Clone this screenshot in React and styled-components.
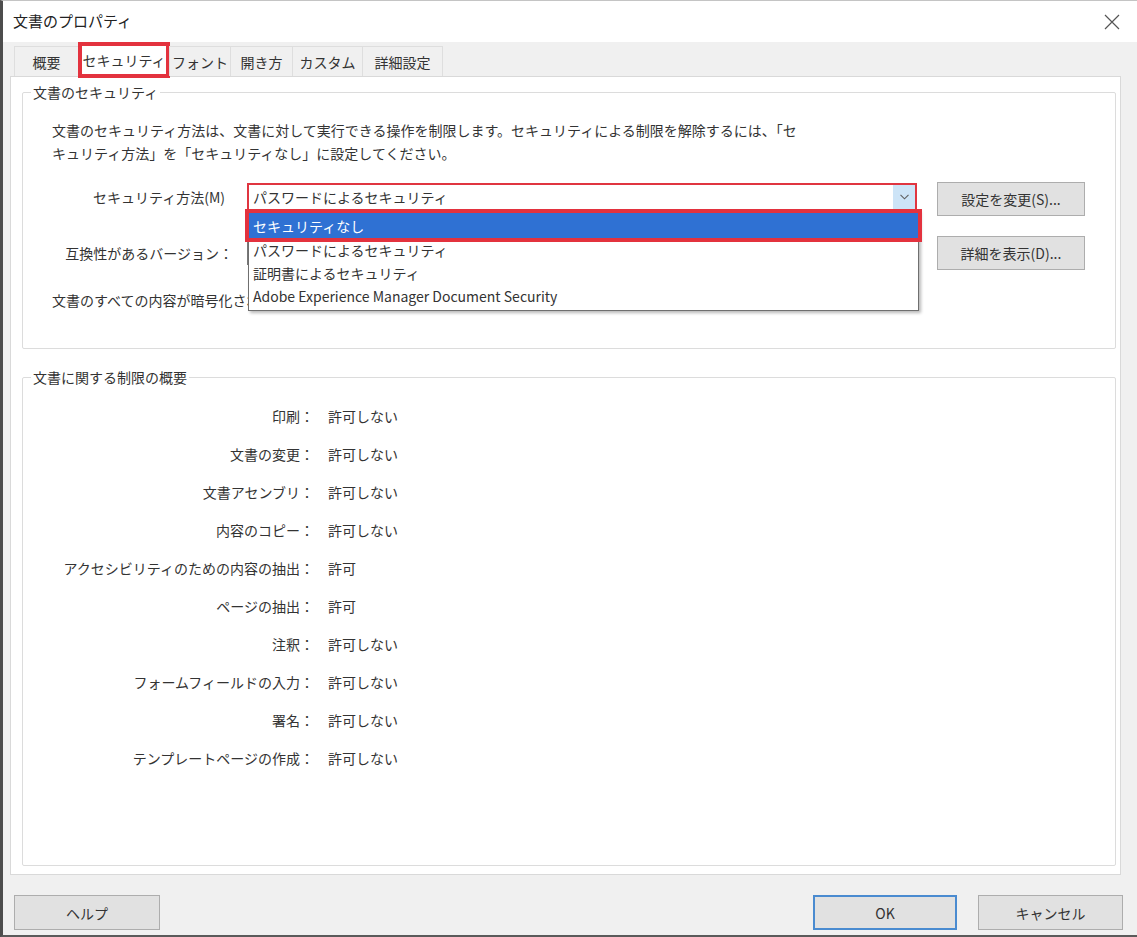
import React from 'react'
import styled, { createGlobalStyle } from 'styled-components'

const GlobalStyle = createGlobalStyle`
  html, body {
    margin: 0;
    padding: 0;
    background: #f0f0f0;
  }
  body {
    font-family: "Noto Sans CJK JP", "Noto Sans", sans-serif;
    color: #333;
  }
  * {
    box-sizing: border-box;
  }
`

// window frame
const Window = styled.div`
  width: 1137px;
  height: 937px;
  display: flex;
  flex-direction: column;
  background: #f0f0f0;
  border-left: 3px solid #4d4d4d;
  border-top: 1px solid #c4c4c4;
  border-bottom: 2px solid #5a5a5a;
`
const TitleBar = styled.div`
  height: 41px;
  flex: none;
  background: #fff;
  display: flex;
  align-items: center;
  justify-content: space-between;
  padding: 0 16px 0 10px;
`
const Title = styled.div`
  font-size: 15px;
  color: #222;
  margin-top: -2px;
`
const CloseButton = styled.div`
  width: 18px;
  height: 18px;
  display: flex;
  align-items: center;
  justify-content: center;
`

// tabs
const Body = styled.div`
  padding: 4px 16px 0 7px;
  flex: none;
`
const TabStrip = styled.div`
  height: 30px;
  display: flex;
  align-items: flex-end;
  padding-left: 4px;
  position: relative;
  z-index: 1;
`
const Tab = styled.div`
  width: ${p => p.w}px;
  height: ${p => (p.active ? 36 : 30)}px;
  margin-bottom: ${p => (p.active ? -2 : 0)}px;
  display: flex;
  align-items: center;
  justify-content: center;
  font-size: 14px;
  color: #333;
  white-space: nowrap;
  background: ${p => (p.active ? '#fff' : '#f0f0f0')};
  border: ${p => (p.active ? '4px solid #e3323e' : '1px solid #dedede')};
  border-bottom: ${p => (p.active ? '4px solid #e3323e' : 'none')};
  & + & {
    margin-left: ${p => (p.active ? 0 : -1)}px;
  }
`

// white page under the tabs
const Panel = styled.div`
  height: 799px;
  background: #fff;
  border: 1px solid #d9d9d9;
  padding: 5px 4px 8px 11px;
  display: flex;
  flex-direction: column;
`
const Group = styled.fieldset`
  margin: 0;
  padding: 0;
  min-width: 0;
  border: 1px solid #dcdcdc;
  border-radius: 2px;
  flex: ${p => (p.grow ? 1 : 'none')};
  & + & {
    margin-top: 18px;
  }
`
const Legend = styled.legend`
  margin-left: 8px;
  padding: 0 2px;
  font-size: 14px;
  line-height: 20px;
  color: #333;
`
const SecurityBody = styled.div`
  padding: 17px 0 38px 0;
`
const Paragraph = styled.p`
  margin: 0 0 17px 29px;
  font-size: 14px;
  line-height: 23px;
  color: #333;
`
const FormGrid = styled.div`
  display: grid;
  grid-template-columns: 224px 690px 148px;
  grid-template-rows: 34px 34px 20px;
  row-gap: 20px;
`
const FieldLabel = styled.div`
  text-align: right;
  font-size: 14px;
  white-space: nowrap;
  align-self: center;
  padding-right: ${p => p.pad || 14}px;
  margin-top: ${p => p.top || 0}px;
`
const WideText = styled.div`
  grid-column: 1 / -1;
  margin-left: 29px;
  width: 196px;
  overflow: hidden;
  font-size: 14px;
  line-height: 20px;
  white-space: nowrap;
`
const SelectWrap = styled.div`
  position: relative;
  width: 670px;
  height: 28px;
  margin-top: 1px;
`
const SelectBox = styled.div`
  height: 28px;
  background: #fff;
  border: 2px solid ${p => (p.marked ? '#e03540' : '#7a7a7a')};
  display: flex;
  align-items: center;
  justify-content: space-between;
  padding-left: 4px;
  font-size: 14px;
  color: #333;
  white-space: nowrap;
`
const Chevron = styled.div`
  width: 22px;
  height: 24px;
  background: ${p => (p.hot ? '#cde4f7' : 'transparent')};
  display: flex;
  align-items: center;
  justify-content: center;
`
const DropList = styled.div`
  position: absolute;
  left: 1px;
  top: 27px;
  width: 671px;
  background: #fff;
  border: 1px solid #6f6f6f;
  box-shadow: 2px 2px 3px rgba(0, 0, 0, 0.28);
  padding: 2px 0 3px;
  z-index: 5;
`
const DropItem = styled.div`
  position: relative;
  height: ${p => (p.selected ? 25 : 23)}px;
  display: flex;
  align-items: center;
  padding-left: 4px;
  font-size: 14px;
  white-space: nowrap;
  color: ${p => (p.selected ? '#fff' : '#333')};
  background: ${p => (p.selected ? '#2f71d3' : 'transparent')};
  outline: ${p => (p.selected ? '4px solid #e3323e' : 'none')};
  z-index: ${p => (p.selected ? 2 : 1)};
`
const Button = styled.button`
  width: ${p => p.w}px;
  height: ${p => p.h}px;
  background: #e1e1e1;
  border: ${p => (p.primary ? '2px solid #4a8bd0' : '1px solid #adadad')};
  font-family: inherit;
  font-size: 14px;
  color: #333;
  padding: 0;
  cursor: pointer;
`

// restriction summary
const RuleGrid = styled.div`
  display: grid;
  grid-template-columns: 291px 1fr;
  grid-auto-rows: 38px;
  column-gap: 14px;
  align-items: center;
  padding-top: 10px;
`
const RuleLabel = styled.div`
  text-align: right;
  font-size: 14px;
  white-space: nowrap;
`
const RuleValue = styled.div`
  font-size: 14px;
`

// bottom buttons
const Footer = styled.div`
  flex: 1;
  display: flex;
  align-items: flex-start;
  gap: 21px;
  padding: 20px 14px 0 11px;
`
const Spacer = styled.div`
  flex: 1;
`

const tabs = [
  { label: '概要', w: 65 },
  { label: 'セキュリティ', w: 92, active: true },
  { label: 'フォント', w: 62 },
  { label: '開き方', w: 63 },
  { label: 'カスタム', w: 71 },
  { label: '詳細設定', w: 81 },
]

const options = [
  'セキュリティなし',
  'パスワードによるセキュリティ',
  '証明書によるセキュリティ',
  'Adobe Experience Manager Document Security',
]

const rules = [
  ['印刷', '許可しない'],
  ['文書の変更', '許可しない'],
  ['文書アセンブリ', '許可しない'],
  ['内容のコピー', '許可しない'],
  ['アクセシビリティのための内容の抽出', '許可'],
  ['ページの抽出', '許可'],
  ['注釈', '許可しない'],
  ['フォームフィールドの入力', '許可しない'],
  ['署名', '許可しない'],
  ['テンプレートページの作成', '許可しない'],
]

const ChevronIcon = () => (
  <svg width="9" height="6" viewBox="0 0 9 6">
    <path d="M0.5 0.8 L4.5 4.8 L8.5 0.8" fill="none" stroke="#606060" strokeWidth="1.1" />
  </svg>
)

const App = () => {
  return (
    <>
      <GlobalStyle />
      <Window>
        <TitleBar>
          <Title>文書のプロパティ</Title>
          <CloseButton>
            <svg width="16" height="16" viewBox="0 0 16 16">
              <path d="M1 1 L15 15 M15 1 L1 15" stroke="#555" strokeWidth="1.2" />
            </svg>
          </CloseButton>
        </TitleBar>

        <Body>
          <TabStrip>
            {tabs.map(t => (
              <Tab key={t.label} w={t.w} active={t.active}>
                {t.label}
              </Tab>
            ))}
          </TabStrip>

          <Panel>
            <Group>
              <Legend>文書のセキュリティ</Legend>
              <SecurityBody>
                <Paragraph>
                  文書のセキュリティ方法は、文書に対して実行できる操作を制限します。セキュリティによる制限を解除するには、「セ
                  <br />
                  キュリティ方法」を「セキュリティなし」に設定してください。
                </Paragraph>
                <FormGrid>
                  <FieldLabel pad={22} top={-4}>セキュリティ方法(M)</FieldLabel>
                  <SelectWrap>
                    <SelectBox marked>
                      パスワードによるセキュリティ
                      <Chevron hot>
                        <ChevronIcon />
                      </Chevron>
                    </SelectBox>
                    <DropList>
                      {options.map((o, i) => (
                        <DropItem key={o} selected={i === 0}>
                          {o}
                        </DropItem>
                      ))}
                    </DropList>
                  </SelectWrap>
                  <Button w={148} h={34}>設定を変更(S)...</Button>

                  <FieldLabel>互換性があるバージョン：</FieldLabel>
                  <SelectWrap>
                    <SelectBox>
                      <span />
                      <Chevron>
                        <ChevronIcon />
                      </Chevron>
                    </SelectBox>
                  </SelectWrap>
                  <Button w={148} h={34}>詳細を表示(D)...</Button>

                  <WideText>文書のすべての内容が暗号化され、検索エンジンは文書のメタデータにアクセスできません。</WideText>
                </FormGrid>
              </SecurityBody>
            </Group>

            <Group grow>
              <Legend>文書に関する制限の概要</Legend>
              <RuleGrid>
                {rules.map(([label, value]) => (
                  <React.Fragment key={label}>
                    <RuleLabel>{label}：</RuleLabel>
                    <RuleValue>{value}</RuleValue>
                  </React.Fragment>
                ))}
              </RuleGrid>
            </Group>
          </Panel>
        </Body>

        <Footer>
          <Button w={146} h={35}>ヘルプ</Button>
          <Spacer />
          <Button w={144} h={35} primary>OK</Button>
          <Button w={145} h={35}>キャンセル</Button>
        </Footer>
      </Window>
    </>
  )
}

export default App
